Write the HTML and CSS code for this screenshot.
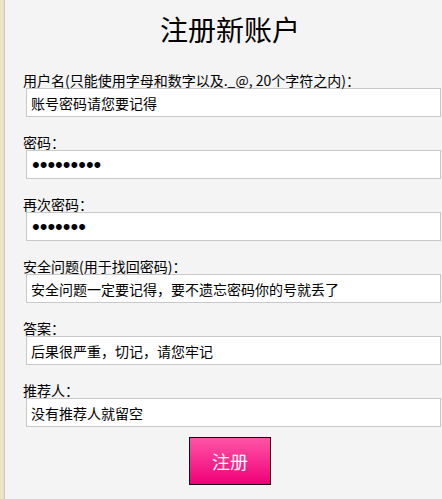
FILE: index.html
```html
<!DOCTYPE html>
<html lang="zh-CN">
<head>
    <meta charset="UTF-8">
    <meta name="viewport" content="width=device-width, initial-scale=1.0">
    <title>注册新账户</title>
    <link rel="stylesheet" href="styles.css">
</head>
<body>
    <div class="pagina">
        <h1 class="titulo">注册新账户</h1>
        <form class="registro">
            <div class="campo">
                <label>用户名(只能使用字母和数字以及._@, 20个字符之内)：</label>
                <input type="text" value="账号密码请您要记得">
            </div>
            <div class="campo">
                <label>密码：</label>
                <input type="password" class="clave" value="123456789">
            </div>
            <div class="campo">
                <label>再次密码：</label>
                <input type="password" class="clave" value="1234567">
            </div>
            <div class="campo">
                <label>安全问题(用于找回密码)：</label>
                <input type="text" value="安全问题一定要记得，要不遗忘密码你的号就丢了">
            </div>
            <div class="campo">
                <label>答案：</label>
                <input type="text" value="后果很严重，切记，请您牢记">
            </div>
            <div class="campo">
                <label>推荐人：</label>
                <input type="text" value="没有推荐人就留空">
            </div>
            <div class="acciones">
                <button type="button" class="boton">注册</button>
            </div>
        </form>
    </div>
</body>
</html>
```

FILE: styles.css
```css
/* Estilos generales */
html, body {
    margin: 0;
    height: 100%;
    overflow: hidden;
}
body {
    background: #ebe5c6;
    font-family: "Noto Sans CJK SC", "Noto Sans", sans-serif;
    color: #000;
}
.pagina {
    margin-left: 4px;
    border-left: 1px solid #c4c6d6;
    background: #f4f4f4;
    min-height: 100%;
    padding: 0 5px 0 18px;
}
.titulo {
    margin: 0;
    padding: 11px 0 25px;
    font-size: 28px;
    font-weight: normal;
    line-height: 36px;
    text-align: center;
}
.campo {
    margin-bottom: 17px;
}
.campo label {
    display: block;
    font-size: 14px;
    line-height: 16px;
}
.campo input {
    display: block;
    box-sizing: border-box;
    width: 415px;
    height: 29px;
    margin: 0 0 0 3px;
    padding: 0 4px;
    border: 1px solid #c8c8c8;
    background: #fff;
    font-family: inherit;
    font-size: 14px;
    color: #000;
    outline: none;
}
/* Los puntos de la contraseña son más grandes */
.campo input.clave {
    padding-left: 5px;
    font-family: "Liberation Sans", sans-serif;
    font-size: 22px;
}
.acciones {
    display: flex;
    justify-content: center;
    margin-top: -7px;
}
.boton {
    width: 82px;
    height: 48px;
    border: 1px solid #1a0010;
    background: linear-gradient(#ff55a6, #f00078);
    color: #fff;
    font-family: inherit;
    font-size: 18px;
    cursor: pointer;
}
```
